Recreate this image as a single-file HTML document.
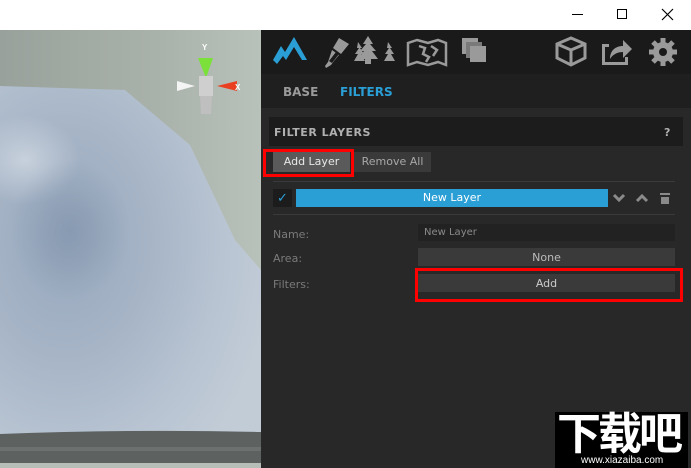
<!DOCTYPE html>
<html><head><meta charset="utf-8"><style>
*{margin:0;padding:0;box-sizing:border-box}
body{width:691px;height:468px;overflow:hidden;background:#fff;font-family:"Liberation Sans","DejaVu Sans",sans-serif;position:relative}
.a{position:absolute}
.t{font-family:"DejaVu Sans","Liberation Sans",sans-serif}
</style></head><body>
<div class="a" style="left:0;top:0;width:691px;height:30px;background:#fff"></div>
<div class="a" style="left:572px;top:14px;width:11px;height:1px;background:#000"></div>
<div class="a" style="left:617px;top:9px;width:10px;height:10px;border:1px solid #000"></div>
<svg class="a" style="left:661px;top:8px" width="13" height="13"><path d="M1 1L12 12M12 1L1 12" stroke="#000" stroke-width="1.2"/></svg>

<!-- viewport -->
<div class="a" style="left:0;top:30px;width:261px;height:438px;background:linear-gradient(90deg,#98a19b,#a9b2aa 60%,#b8c1ba)"></div>
<svg class="a" style="left:0;top:30px" width="261" height="438">
<defs>
<radialGradient id="g" cx="0.25" cy="0.45" r="0.8"><stop offset="0" stop-color="#97a8bd"/><stop offset="0.4" stop-color="#a6b4c6"/><stop offset="0.75" stop-color="#b8c4d2"/><stop offset="1" stop-color="#c2ccd7"/></radialGradient>
<radialGradient id="w" cx="0.5" cy="0.5" r="0.5"><stop offset="0" stop-color="#dfe5ec" stop-opacity=".6"/><stop offset="1" stop-color="#dfe5ec" stop-opacity="0"/></radialGradient>
<radialGradient id="d" cx="0.5" cy="0.5" r="0.5"><stop offset="0" stop-color="#7d90a9" stop-opacity=".6"/><stop offset="1" stop-color="#7d90a9" stop-opacity="0"/></radialGradient>
</defs>
<path d="M0 56L125 60L190 115L235 210L261 240L261 405L0 405Z" fill="url(#g)"/>
<ellipse cx="25" cy="130" rx="55" ry="45" fill="url(#w)"/>
<ellipse cx="70" cy="200" rx="60" ry="70" fill="url(#d)"/>
<path d="M0 404Q130 399 261 402L261 433L0 433Z" fill="#5d6160"/>
<rect x="0" y="417" width="261" height="4" fill="#6c706f"/>
<rect x="0" y="433" width="261" height="5" fill="#b7beb8"/>
<path d="M198 28L213 28L206 48Z" fill="#7be03a"/>
<path d="M217 56L237 51L237 61Z" fill="#e84020"/>
<path d="M195 56L177 51L177 61Z" fill="#f4f4f4"/>
<path d="M200 66L212 66L211 84L201 84Z" fill="#bfbfbf"/>
<rect x="199" y="46" width="14" height="20" fill="#cfcfcf"/>
<text x="202" y="20" font-size="8" fill="#fff" font-weight="bold">Y</text>
<text x="235" y="60" font-size="8" fill="#fff" font-weight="bold">X</text>
</svg>

<!-- panel -->
<div class="a" style="left:261px;top:30px;width:430px;height:438px;background:#282828"></div>
<div class="a" style="left:261px;top:30px;width:430px;height:44px;background:#1a1a1a"></div>
<div class="a" style="left:261px;top:74px;width:430px;height:34px;background:#1f1f1f"></div>
<svg class="a" style="left:261px;top:30px" width="430" height="44">
<path d="M12 30L20 16L24 22L33 7L46 30L41 30L33 17L25 30L22 26L16 34Z" fill="#2a9fd6"/>
<g fill="#9a9a9a">
<path d="M78 8l10 6-8 10-8-6z"/>
<path d="M71 20l7 5-5 6-3 4-5 3-1-2 3-4 2-6z"/>
<path d="M75 22l3 2-7 9-3-2z" fill="#1a1a1a"/>
<path d="M107 6l5 8-3 0 6 7-4 0 6 8-7 0 0 5-6 0 0-5-7 0 6-8-4 0 6-7-3 0z"/>
<path d="M97 12l4 6-2 0 4 6-3 0 4 7-11 0 4-7-3 0 4-6-2 0z"/>
<path d="M127 12l4 6-2 0 4 6-3 0 4 7-11 0 4-7-3 0 4-6-2 0z"/>
<path d="M156 10l11 3 10-3 8 3v22l-8-3-10 3-11-3-9 3v-22z" fill="none" stroke="#9a9a9a" stroke-width="2.5"/>
<path d="M158 16l6 2-2 6 6 3-3 5M170 16l6 4-4 6" fill="none" stroke="#9a9a9a" stroke-width="2.5"/>
<rect x="201" y="8" width="16" height="16"/><rect x="205" y="12" width="16" height="16" fill="#7a7a7a"/><rect x="209" y="16" width="16" height="16"/>
<path d="M310 8l14 6v14l-14 7-14-7v-14z" fill="none" stroke="#9a9a9a" stroke-width="3"/>
<path d="M296 14l14 6 14-6M310 20v15" fill="none" stroke="#9a9a9a" stroke-width="3"/>
<path d="M341 14h7v3h-4v15h20v-5h3v8h-26zM349 29c0-9 6-13 13-13v-6l9 9-9 9v-6c-5 0-10 2-13 7z"/>
<circle cx="402" cy="22" r="10"/>
<g stroke="#9a9a9a" stroke-width="5"><path d="M402 8v28M388 22h28M392 12l20 20M412 12l-20 20"/></g>
<circle cx="402" cy="22" r="4" fill="#1a1a1a"/>
</g></svg>
<div class="a t" style="left:283px;top:85px;font-size:12px;font-weight:bold;color:#9a9a9a">BASE</div>
<div class="a t" style="left:340px;top:85px;font-size:12px;font-weight:bold;color:#2a9fd6">FILTERS</div>

<div class="a" style="left:269px;top:117px;width:414px;height:29px;background:#1c1c1c"></div>
<div class="a t" style="left:274px;top:126px;font-size:11px;font-weight:bold;color:#b0b0b0;letter-spacing:.5px">FILTER LAYERS</div>
<div class="a t" style="left:664px;top:126px;font-size:11px;font-weight:bold;color:#b0b0b0">?</div>

<div class="a t" style="left:273px;top:152px;width:77px;height:20px;background:#5a5a5a;color:#e8e8e8;font-size:11px;text-align:center;line-height:20px">Add Layer</div>
<div class="a t" style="left:354px;top:152px;width:77px;height:20px;background:#3a3a3a;color:#a8a8a8;font-size:11px;text-align:center;line-height:20px">Remove All</div>
<div class="a" style="left:263px;top:149px;width:91px;height:28px;border:3px solid #f00"></div>
<div class="a" style="left:273px;top:181px;width:402px;height:1px;background:#3a3a3a"></div>

<div class="a" style="left:273px;top:189px;width:19px;height:18px;background:#1c1c1c;color:#2a9fd6;font-size:13px;text-align:center;line-height:18px">✓</div>
<div class="a t" style="left:296px;top:189px;width:312px;height:18px;background:#2a9fd6;color:#fff;font-size:11px;text-align:center;line-height:18px">New Layer</div>
<svg class="a" style="left:611px;top:190px" width="64" height="16"><g fill="none" stroke="#8a8a8a" stroke-width="3"><path d="M3 5l5 5 5-5M26 11l5-5 5 5"/></g><rect x="49" y="3" width="10" height="2" fill="#8a8a8a"/><rect x="50" y="7" width="8" height="7" fill="#8a8a8a"/></svg>
<div class="a" style="left:273px;top:214px;width:402px;height:1px;background:#3a3a3a"></div>

<div class="a t" style="left:273px;top:228px;font-size:11px;color:#7a7a7a">Name:</div>
<div class="a t" style="left:273px;top:252px;font-size:11px;color:#7a7a7a">Area:</div>
<div class="a t" style="left:273px;top:278px;font-size:11px;color:#7a7a7a">Filters:</div>
<div class="a t" style="left:418px;top:224px;width:257px;height:17px;background:#222;color:#8a8a8a;font-size:10px;line-height:18px;padding-left:6px">New Layer</div>
<div class="a t" style="left:418px;top:248px;width:257px;height:18px;background:#3a3a3a;color:#bbb;font-size:11px;text-align:center;line-height:19px">None</div>
<div class="a t" style="left:418px;top:274px;width:257px;height:18px;background:#3a3a3a;color:#ccc;font-size:11px;text-align:center;line-height:19px">Add</div>
<div class="a" style="left:415px;top:268px;width:268px;height:34px;border:3px solid #f00"></div>

<div class="a" style="left:555px;top:412px;width:133px;height:56px;background:#000"></div>
<div class="a" style="left:557px;top:404px;font-family:'Noto Sans CJK SC',sans-serif;font-size:44px;font-weight:bold;color:#fff;letter-spacing:-3px;line-height:52px">下载吧</div>
<div class="a" style="left:581px;top:455px;font-size:10px;color:#fff;line-height:12px">www.xiazaiba.com</div>
</body></html>
